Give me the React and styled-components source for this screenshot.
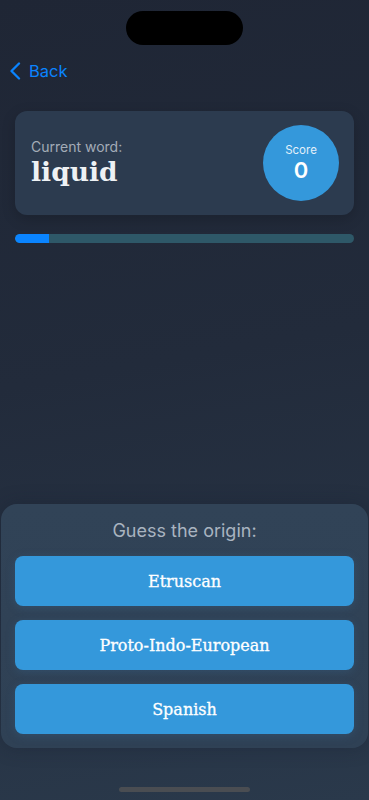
import React from "react";
import styled, { createGlobalStyle } from "styled-components";

const Global = createGlobalStyle`
  html, body { margin: 0; padding: 0; }
  body { font-family: Inter, "Noto Sans", sans-serif; background: #1f2636; }
  * { box-sizing: border-box; }
`;

const Screen = styled.div`
  position: relative;
  width: 369px;
  height: 800px;
  overflow: hidden;
  background: linear-gradient(170deg, #1f2635 0%, #222b3b 45%, #2a394b 100%);
  display: flex;
  flex-direction: column;
`;

const Island = styled.div`
  position: absolute;
  top: 11px;
  left: 126px;
  width: 117px;
  height: 34px;
  border-radius: 17px;
  background: #000;
`;

const BackButton = styled.button`
  margin: 61px 0 0 9px;
  align-self: flex-start;
  display: flex;
  align-items: center;
  gap: 8px;
  background: none;
  border: none;
  padding: 0;
  color: #0a84ff;
  font-family: Inter, sans-serif;
  font-size: 16.5px;
  height: 20px;
  cursor: pointer;
`;

const WordCard = styled.div`
  margin: 30px 15px 0 15px;
  height: 104px;
  border-radius: 12px;
  background: #2c3b4f;
  box-shadow: 0 4px 14px rgba(0, 0, 0, 0.18);
  display: flex;
  align-items: center;
  justify-content: space-between;
  padding: 0 15px 0 16px;
`;

const WordInfo = styled.div`
  display: flex;
  flex-direction: column;
`;

const Label = styled.div`
  font-size: 14px;
  color: #a3acb7;
  line-height: 17px;
`;

const Word = styled.div`
  font-family: "DejaVu Serif", serif;
  font-weight: 700;
  font-size: 26.5px;
  color: #eef1f4;
  line-height: 34px;
`;

const ScoreCircle = styled.div`
  width: 76px;
  height: 76px;
  border-radius: 50%;
  background: #3498db;
  display: flex;
  flex-direction: column;
  align-items: center;
  justify-content: center;
  color: #fff;
`;

const ScoreLabel = styled.div`
  font-size: 11.5px;
  line-height: 14px;
  color: #e3f0fa;
`;

const ScoreValue = styled.div`
  font-size: 22px;
  font-weight: 600;
  line-height: 26px;
`;

const Track = styled.div`
  margin: 19px 15px 0 15px;
  height: 9px;
  border-radius: 5px;
  background: #2e5868;
  overflow: hidden;
`;

const Fill = styled.div`
  height: 100%;
  background: #0a84ff;
  border-radius: 5px 0 0 5px;
`;

const Spacer = styled.div`
  flex: 1;
`;

const Panel = styled.div`
  margin: 0 1px 52px 1px;
  border-radius: 16px;
  background: linear-gradient(180deg, #314357 0%, #2f4155 100%);
  box-shadow: 0 0 18px rgba(20, 30, 45, 0.35);
  padding: 16px 14px 14px 14px;
  display: flex;
  flex-direction: column;
  gap: 14px;
`;

const Prompt = styled.div`
  text-align: center;
  font-size: 18px;
  color: #a9b4c0;
  line-height: 22px;
`;

const Option = styled.button`
  height: 50px;
  border: none;
  border-radius: 8px;
  background: #3498db;
  color: #fff;
  font-family: "DejaVu Serif", serif;
  font-size: 16px;
  -webkit-text-stroke: 0.3px #fff;
  box-shadow: 0 2px 10px rgba(60, 120, 170, 0.25);
  cursor: pointer;
`;

const HomeBar = styled.div`
  position: absolute;
  bottom: 8px;
  left: 119px;
  width: 131px;
  height: 5px;
  border-radius: 3px;
  background: #4a4d52;
`;

const Chevron = () => (
  <svg width="12" height="18" viewBox="0 0 12 18" fill="none">
    <path d="M10 1.5 L2.5 9 L10 16.5" stroke="#0a84ff" strokeWidth="2.3" strokeLinecap="round" strokeLinejoin="round" />
  </svg>
);

export default function App() {
  const options = ["Etruscan", "Proto-Indo-European", "Spanish"];
  const progress = 10;
  return (
    <>
      <Global />
      <Screen>
        <Island />
        <BackButton>
          <Chevron />
          Back
        </BackButton>
        <WordCard>
          <WordInfo>
            <Label>Current word:</Label>
            <Word>liquid</Word>
          </WordInfo>
          <ScoreCircle>
            <ScoreLabel>Score</ScoreLabel>
            <ScoreValue>0</ScoreValue>
          </ScoreCircle>
        </WordCard>
        <Track>
          <Fill style={{ width: `${progress}%` }} />
        </Track>
        <Spacer />
        <Panel>
          <Prompt>Guess the origin:</Prompt>
          {options.map((o) => (
            <Option key={o}>{o}</Option>
          ))}
        </Panel>
        <HomeBar />
      </Screen>
    </>
  );
}
